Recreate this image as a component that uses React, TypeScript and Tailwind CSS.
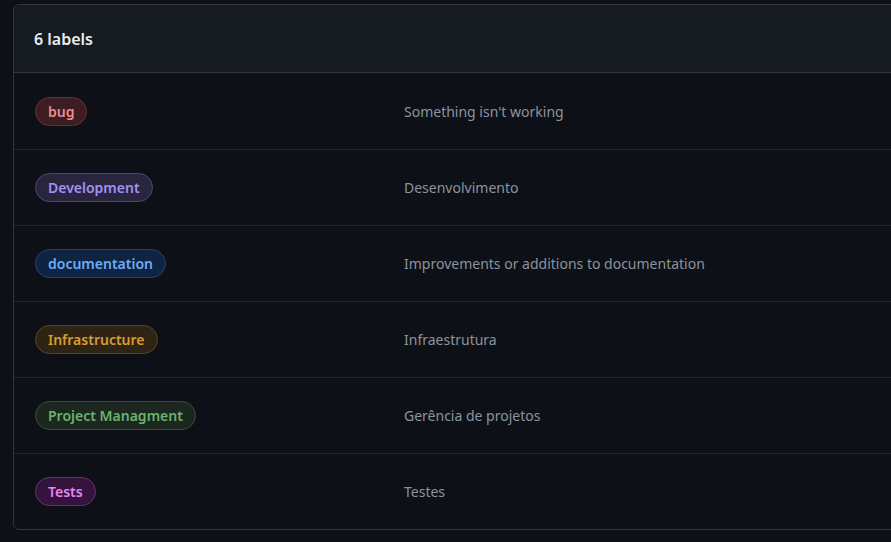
import React from 'react';

type Label = {
  name: string;
  description: string;
  pill: string;
};

const labels: Label[] = [
  {
    name: 'bug',
    description: "Something isn't working",
    pill: 'bg-[#3b1d22] border-[#6b2f37] text-[#f08a93]',
  },
  {
    name: 'Development',
    description: 'Desenvolvimento',
    pill: 'bg-[#29253f] border-[#4d4675] text-[#a390f7]',
  },
  {
    name: 'documentation',
    description: 'Improvements or additions to documentation',
    pill: 'bg-[#0e2442] border-[#1f4575] text-[#6cacf5]',
  },
  {
    name: 'Infrastructure',
    description: 'Infraestrutura',
    pill: 'bg-[#2e2415] border-[#5c4420] text-[#dc9a2e]',
  },
  {
    name: 'Project Managment',
    description: 'Gerência de projetos',
    pill: 'bg-[#1b271f] border-[#31513a] text-[#6cb26e]',
  },
  {
    name: 'Tests',
    description: 'Testes',
    pill: 'bg-[#34143d] border-[#66307a] text-[#ee82ee]',
  },
];

export default function App() {
  return (
    <div
      className="w-[891px] h-[542px] overflow-hidden bg-[#0d1117] pt-[4px] pl-[13px]"
      style={{ fontFamily: '"Noto Sans", "Open Sans", sans-serif' }}
    >
      <div className="w-[920px] border border-[#30363d] rounded-md overflow-hidden">
        <div className="h-[68px] bg-[#161b22] border-b border-[#30363d] flex items-center pl-[20px]">
          <h2 className="text-[16px] font-semibold text-[#e6edf3]">6 labels</h2>
        </div>
        {labels.map((l, i) => {
          const size =
            i === 0
              ? 'h-[77px] pt-[1px] border-b border-[#21262d]'
              : i < labels.length - 1
              ? 'h-[76px] border-b border-[#21262d]'
              : 'h-[75px]';
          return (
            <div key={l.name} className={`flex items-center pl-[21px] ${size}`}>
              <div className="w-[369px] flex">
                <span
                  className={`h-[29px] px-[12px] inline-flex items-center rounded-full border text-[14px] font-semibold ${l.pill}`}
                >
                  {l.name}
                </span>
              </div>
              <div className="text-[14px] text-[#8b949e]">{l.description}</div>
            </div>
          );
        })}
      </div>
    </div>
  );
}
